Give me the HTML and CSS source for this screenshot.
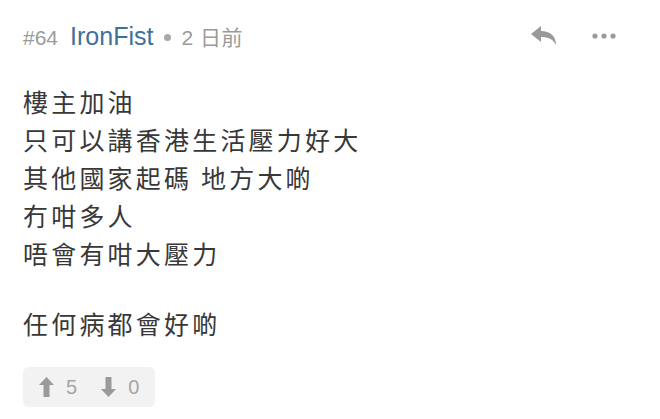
FILE: index.html
```html
<!DOCTYPE html>
<html lang="zh-Hant">
<head>
<meta charset="utf-8">
<link rel="stylesheet" href="styles.css">
</head>
<body>
<div class="post">
  <div class="header">
    <div class="meta">
      <span class="num">#64</span>
      <span class="user">IronFist</span>
      <span class="dot"></span>
      <span class="time">2 日前</span>
    </div>
    <div class="actions">
      <svg class="reply" width="26" height="19" viewBox="0 0 26 19"><path d="M0 8 L10 0 L10 5 C19 5 25 10 25 19 C22 13 17 11 10 11 L10 16 Z" fill="#9a9a9a"/></svg>
      <svg class="more" width="24" height="6" viewBox="0 0 24 6"><circle cx="3" cy="3" r="2.6" fill="#9a9a9a"/><circle cx="12" cy="3" r="2.6" fill="#9a9a9a"/><circle cx="21" cy="3" r="2.6" fill="#9a9a9a"/></svg>
    </div>
  </div>
  <div class="content">
    <p>樓主加油<br>只可以講香港生活壓力好大<br>其他國家起碼 地方大啲<br>冇咁多人<br>唔會有咁大壓力</p>
    <p class="last">任何病都會好啲</p>
  </div>
  <div class="votes">
    <span class="vote">
      <svg width="15" height="20" viewBox="0 0 15 20"><path d="M7.5 0 L15 8 L10.5 8 L10.5 20 L4.5 20 L4.5 8 L0 8 Z" fill="#9a9a9a"/></svg>
      <span class="count">5</span>
    </span>
    <span class="vote">
      <svg width="15" height="20" viewBox="0 0 15 20"><path d="M7.5 20 L15 12 L10.5 12 L10.5 0 L4.5 0 L4.5 12 L0 12 Z" fill="#9a9a9a"/></svg>
      <span class="count">0</span>
    </span>
  </div>
</div>
</body>
</html>
```
FILE: styles.css
```css
html, body {
  margin: 0;
  padding: 0;
  background: #ffffff;
}
.post {
  padding: 20px 23px 0 23px;
  font-family: "Liberation Sans", "Noto Sans CJK TC", sans-serif;
}
.header {
  display: flex;
  align-items: center;
  justify-content: space-between;
  height: 32px;
}
.meta {
  display: flex;
  align-items: baseline;
  color: #9b9b9b;
  font-size: 21px;
}
.num {
  margin-right: 12px;
}
.user {
  color: #3e7098;
  font-size: 25px;
  margin-right: 11px;
}
.dot {
  display: inline-block;
  width: 7px;
  height: 7px;
  border-radius: 50%;
  background: #a8a8a8;
  margin-right: 10px;
  align-self: center;
  position: relative;
  top: 1px;
}
.time {
  letter-spacing: 0.5px;
}
.actions {
  display: flex;
  align-items: center;
  gap: 35px;
  margin-right: 21px;
}
.reply {
  margin-top: -2px;
}
.content {
  margin-top: 30px;
  font-family: "Noto Sans CJK TC", sans-serif;
  font-size: 25px;
  line-height: 38px;
  letter-spacing: 3.2px;
  color: #383838;
}
.content p {
  margin: 0 0 32px 0;
}
.content p.last {
  margin-bottom: 25px;
}
.votes {
  display: inline-flex;
  align-items: center;
  gap: 24px;
  background: #f2f2f2;
  border-radius: 6px;
  padding: 10px 16px;
  height: 20px;
}
.vote {
  display: flex;
  align-items: center;
  gap: 12px;
}
.count {
  color: #a5a5a5;
  font-size: 20px;
}
```
